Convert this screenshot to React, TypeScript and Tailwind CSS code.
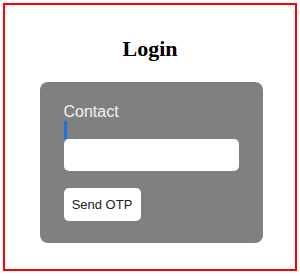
export default function App() {
  return (
    <div className="w-[300px] h-[276px] bg-white pt-[3px] pl-[3px]">
      <div className="w-[294px] h-[268px] border-2 border-[#ff0000] flex flex-col items-center">
        <h2
          className="mt-[31px] text-[22px] leading-[25px] font-bold text-black"
          style={{ fontFamily: '"Liberation Serif", "Times New Roman", serif' }}
        >
          Login
        </h2>
        <div
          className="mt-[21px] ml-[2px] w-[223px] h-[161px] bg-[#808080] rounded-[8px] pt-[21px] px-[24px] flex flex-col"
          style={{ fontFamily: '"Liberation Sans", Arial, sans-serif' }}
        >
          <label className="text-[16px] leading-[18px] text-[#f2f2f2]">Contact</label>
          <div className="w-[3px] h-[18px] bg-[#1a73e8]" />
          <div className="w-[175px] h-[32px] bg-white rounded-[5px]" />
          <button className="mt-[17px] w-[77px] h-[33px] bg-white rounded-[5px] text-[13px] text-[#222] flex items-center justify-center">
            Send OTP
          </button>
        </div>
      </div>
    </div>
  );
}
